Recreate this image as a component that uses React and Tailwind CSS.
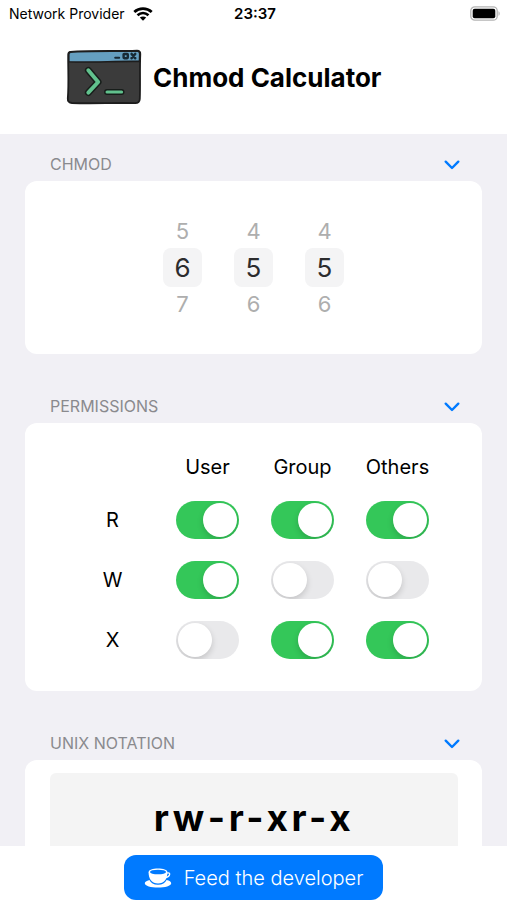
import { useState } from "react";

const CLASSES = ["User", "Group", "Others"];
const BITS = [
  { label: "R", name: "read", value: 4 },
  { label: "W", name: "write", value: 2 },
  { label: "X", name: "execute", value: 1 },
];

function WifiIcon() {
  return (
    <svg viewBox="0 0 20 14" className="h-[14px] w-5" fill="none" stroke="black" aria-hidden="true">
      <path d="M1.3 5C6.2.5 13.8.5 18.7 5" strokeWidth="2.8" />
      <path d="M4.5 8.3C7.8 5.3 12.2 5.3 15.5 8.3" strokeWidth="2.6" />
      <path d="M10 13.700 6.800 10.600C8.600 9 11.400 9 13.200 10.600Z" fill="black" stroke="none" />
    </svg>
  );
}

function BatteryIcon() {
  return (
    <svg viewBox="0 0 31 15" className="h-[15px] w-[31px]" aria-hidden="true">
      <rect x="0.8" y="0.8" width="26.4" height="13.4" rx="4" fill="white" stroke="#b4b4b4" strokeWidth="1.3" />
      <rect x="2.7" y="2.7" width="22.6" height="9.6" rx="2" fill="black" />
      <path d="M28.500 5.200c1.600.6 1.600 4 0 4.600z" fill="#b4b4b4" />
    </svg>
  );
}

function TerminalLogo() {
  return (
    <svg viewBox="0 0 76 56" className="h-14 w-[76px]" strokeLinejoin="round" strokeLinecap="round" aria-hidden="true">
      <path d="M4.5 2.8C25 1.4 52 2.4 71 1.6 73.5 1.7 74.4 3 74.3 5 73.6 20 74.4 36 73.8 50 73.6 53 72 54.2 69 54.1 48 53.6 27 54.8 6 54 3 53.8 1.6 52 1.8 49.5 3 35 2 20 2.2 5.5 2.3 3.8 3 2.9 4.5 2.8Z" fill="#3b3b3b" stroke="#1d1d1d" strokeWidth="1.8" />
      <path d="M4.6 3.1C25 1.9 52 2.6 71 2 73 2.1 73.8 3.2 73.7 5L73.5 12.4C50 12 27 13.6 2.8 12.8L2.8 5.5C2.8 4 3.3 3.2 4.6 3.1Z" fill="#659fc0" stroke="#1d1d1d" strokeWidth="1.6" />
      <path d="M49.2 8.8h4" stroke="#172a35" strokeWidth="2" />
      <rect x="57.600" y="5" width="4.200" height="4.200" rx=".6" fill="#659fc0" stroke="#172a35" strokeWidth="2.4" />
      <path d="m65.600 5 3.600 4.200m0-4.200-3.600 4.200" stroke="#172a35" strokeWidth="2.6" />
      <path d="M22.300 21.300 32.200 33 22.300 43.600" fill="none" stroke="#171d1a" strokeWidth="6.800" />
      <path d="M22.300 21.300 32.200 33 22.300 43.600" fill="none" stroke="#61c18d" strokeWidth="3.900" />
      <path d="M41 43H55.600" stroke="#171d1a" strokeWidth="5.800" />
      <path d="M41 43H55.600" stroke="#61c18d" strokeWidth="3" />
    </svg>
  );
}

function CupIcon() {
  return (
    <svg viewBox="0 0 28 20" className="h-5 w-7" fill="white" aria-hidden="true">
      <path d="M5.4 12C2.5 12.8.8 13.9.8 15.2.8 17.8 7 19.6 14 19.6S27.200 17.800 27.200 15.200C27.200 13.900 25.500 12.700 22.600 12 21 15.200 18.500 16.700 14 16.700S7 15.200 5.400 12Z" />
      <path d="M4.600 4.200C4.600 2 8.800.6 14 .6S23.400 2 23.400 4.200C23.400 11.500 20 15.400 14 15.400S4.600 11.500 4.600 4.200Z" />
      <ellipse cx="14" cy="4" rx="8" ry="2.300" fill="#007aff" />
      <path d="M22.600 5.100C25 4.400 26 5.200 25.600 6.600 25.200 8.200 23.600 9.200 21.800 9.500" fill="none" stroke="white" strokeWidth="1.300" />
    </svg>
  );
}

function Section({ title, children }) {
  const [open, setOpen] = useState(true);
  return (
    <section>
      <div className="flex h-[34px] items-center justify-between pr-[22px] pl-[25px]">
        <h2 className="text-base text-[#8a8a8e]">{title}</h2>
        <button type="button" aria-label={`Toggle ${title}`} aria-expanded={open} onClick={() => setOpen(!open)}>
          <svg viewBox="0 0 16 10" className="mt-[2px] h-[10px] w-4" fill="none" stroke="#007aff" strokeWidth="2.400" strokeLinecap="round" strokeLinejoin="round">
            <path d="M1.700 1.700 8 8 14.300 1.700" />
          </svg>
        </button>
      </div>
      {open && <div className="overflow-hidden rounded-xl bg-white">{children}</div>}
    </section>
  );
}

function DigitWheel({ label, value, onChange }) {
  const side = "h-[34px] w-full text-[22px] leading-none text-[#aeaeae]";
  return (
    <div className="flex w-[39px] flex-col items-center">
      <button type="button" className={side} onClick={() => onChange(value - 1)}>
        {value > 0 ? value - 1 : ""}
      </button>
      <input
        type="text"
        inputMode="numeric"
        aria-label={label}
        value={value}
        onChange={(e) => onChange(Number(e.target.value.slice(-1)))}
        className="h-[39px] w-full rounded-lg bg-[#f4f4f5] text-center text-[26px] text-[#2c2c2e] outline-none"
      />
      <button type="button" className={side} onClick={() => onChange(value + 1)}>
        {value < 7 ? value + 1 : ""}
      </button>
    </div>
  );
}

function Toggle({ label, checked, onChange }) {
  return (
    <input
      type="checkbox"
      role="switch"
      aria-label={label}
      checked={checked}
      onChange={onChange}
      className="block h-[38px] w-[63px] appearance-none overflow-hidden rounded-full bg-[#e9e9eb] p-[2px] before:block before:size-[34px] before:rounded-full before:bg-white before:shadow-[0_3px_6px_rgba(0,0,0,0.16)] checked:bg-[#34c759] checked:before:ml-[25px]"
    />
  );
}

export default function App() {
  const [digits, setDigits] = useState([6, 5, 5]);
  const setDigit = (index, value) => {
    if (value >= 0 && value <= 7) setDigits(digits.map((d, i) => (i === index ? value : d)));
  };
  const notation = digits
    .map((d) => (d & 4 ? "r" : "-") + (d & 2 ? "w" : "-") + (d & 1 ? "x" : "-"))
    .join("");

  return (
    <div className="flex h-screen flex-col bg-white font-['Inter','Liberation_Sans',sans-serif] text-black">
      <div className="grid h-[27px] shrink-0 grid-cols-[1fr_auto_1fr] items-center pr-[6px] pl-[9px] text-sm">
        <div className="flex items-center gap-2">
          <span>Network Provider</span>
          <WifiIcon />
        </div>
        <span className="text-[15px] font-semibold">23:37</span>
        <div className="flex justify-end">
          <BatteryIcon />
        </div>
      </div>

      <header className="flex h-[107px] shrink-0 items-start gap-[11px] pt-[22px] pl-[66px]">
        <TerminalLogo />
        <h1 className="text-[26px] leading-[58px] font-bold">Chmod Calculator</h1>
      </header>

      <main className="flex min-h-0 flex-1 flex-col gap-[35px] overflow-y-auto bg-[#f1f0f5] px-[25px] pt-[13px] [scrollbar-width:none]">
        <Section title="CHMOD">
          <div className="flex justify-center gap-8 py-[33px]">
            {digits.map((d, i) => (
              <DigitWheel key={CLASSES[i]} label={CLASSES[i]} value={d} onChange={(v) => setDigit(i, v)} />
            ))}
          </div>
        </Section>

        <Section title="PERMISSIONS">
          <div className="py-[21px] pr-[37px] pl-10">
            <table className="w-full table-fixed text-center text-xl">
              <thead>
                <tr className="h-[46px]">
                  <td />
                  {CLASSES.map((c) => (
                    <th key={c} scope="col" className="font-normal">
                      {c}
                    </th>
                  ))}
                </tr>
              </thead>
              <tbody>
                {BITS.map((bit) => (
                  <tr key={bit.label} className="h-[60px]">
                    <th scope="row" className="font-normal">
                      {bit.label}
                    </th>
                    {digits.map((d, i) => (
                      <td key={CLASSES[i]}>
                        <div className="flex justify-center">
                          <Toggle
                            label={`${CLASSES[i]} ${bit.name}`}
                            checked={(d & bit.value) !== 0}
                            onChange={() => setDigit(i, d ^ bit.value)}
                          />
                        </div>
                      </td>
                    ))}
                  </tr>
                ))}
              </tbody>
            </table>
          </div>
        </Section>

        <Section title="UNIX NOTATION">
          <div className="pt-[13px] pr-6 pb-[13px] pl-[25px]">
            <output className="block rounded-md bg-[#f4f4f4] py-5 text-center text-[37px] leading-[50px] font-bold tracking-widest">
              {notation}
            </output>
          </div>
        </Section>
      </main>

      <footer className="flex h-[54px] shrink-0 items-start justify-center bg-white pt-[9px]">
        <button type="button" className="flex h-[45px] items-center gap-3 rounded-xl bg-[#007aff] px-5 text-xl leading-[30px] font-light text-white">
          <CupIcon />
          Feed the developer
        </button>
      </footer>
    </div>
  );
}
